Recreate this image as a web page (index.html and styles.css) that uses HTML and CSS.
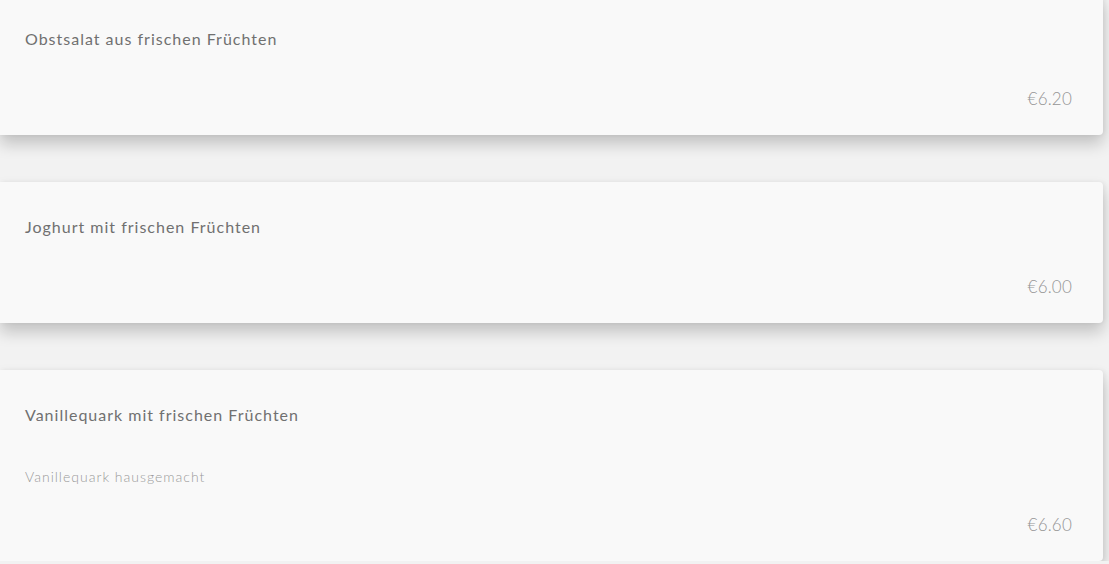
FILE: index.html
```html
<!DOCTYPE html>
<html lang="de">
<head>
<meta charset="utf-8">
<title>Menü</title>
<link rel="stylesheet" href="styles.css">
</head>
<body>
<main class="menu">
  <article class="card">
    <h3 class="card-title">Obstsalat aus frischen Früchten</h3>
    <div class="card-price">€6.20</div>
  </article>
  <article class="card">
    <h3 class="card-title">Joghurt mit frischen Früchten</h3>
    <div class="card-price">€6.00</div>
  </article>
  <article class="card">
    <h3 class="card-title">Vanillequark mit frischen Früchten</h3>
    <p class="card-desc">Vanillequark hausgemacht</p>
    <div class="card-price card-price-after-desc">€6.60</div>
  </article>
</main>
</body>
</html>
```
FILE: styles.css
```css
html, body {
  margin: 0;
  padding: 0;
  background: #f2f2f2;
  font-family: Lato, "Open Sans", sans-serif;
}
.menu {
  display: flex;
  flex-direction: column;
  gap: 47px;
  margin-top: -6px;
  margin-right: 6px;
}
.card {
  background: #f9f9f9;
  border-radius: 0 4px 4px 0;
  box-shadow: 0 9px 16px rgba(0, 0, 0, 0.2), 2px 0 4px rgba(0, 0, 0, 0.05);
  padding: 30px 31px 21px 25px;
  display: flex;
  flex-direction: column;
}
.card-title {
  margin: 0;
  font-size: 16px;
  font-weight: 400;
  line-height: 30px;
  letter-spacing: 1px;
  color: #707070;
}
.card-desc {
  margin: 37px 0 0;
  font-size: 14px;
  font-weight: 300;
  line-height: 20px;
  letter-spacing: 1px;
  color: #999;
}
.card-price {
  margin-top: 30px;
  align-self: flex-end;
  font-size: 17px;
  font-weight: 300;
  line-height: 30px;
  letter-spacing: 0.2px;
  color: #959595;
}
.card-price-after-desc {
  margin-top: 23px;
}
```
